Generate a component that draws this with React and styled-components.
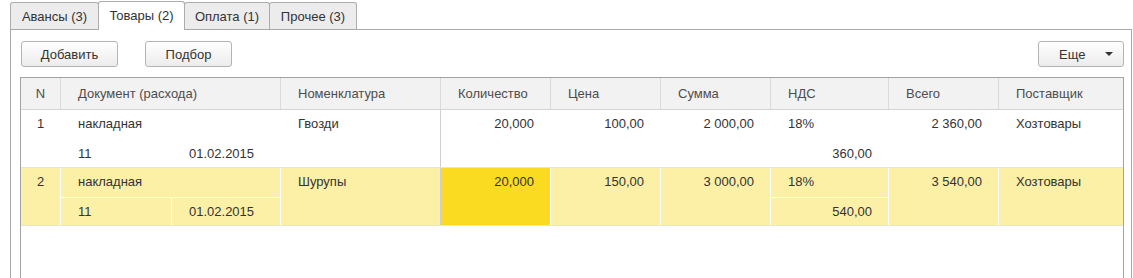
import React from "react";
import styled, { createGlobalStyle } from "styled-components";

const GlobalStyle = createGlobalStyle`
  html, body {
    margin: 0;
    padding: 0;
    background: #fff;
    overflow: hidden;
  }
  body {
    font-family: "Liberation Sans", Arial, sans-serif;
    font-size: 13px;
    color: #333;
  }
`;

const COLS = "40px 220px 160px 110px 110px 110px 118px 110px 1fr";

const Page = styled.div`
  display: flex;
  flex-direction: column;
  height: 100vh;
  box-sizing: border-box;
  padding: 1px 1px 0 10px;
`;

const TabBar = styled.div`
  display: flex;
  align-items: flex-end;
  height: 28px;
  position: relative;
  z-index: 1;
`;

const Tab = styled.div`
  box-sizing: border-box;
  width: ${(p) => p.$w}px;
  height: ${(p) => (p.$active ? "29px" : "27px")};
  margin-bottom: ${(p) => (p.$active ? "-1px" : "0")};
  margin-left: ${(p) => (p.$first ? "0" : "-1px")};
  display: flex;
  align-items: center;
  justify-content: center;
  padding-bottom: ${(p) => (p.$active ? "1px" : "0")};
  border: 1px solid #adadad;
  border-bottom: none;
  border-radius: 3px 3px 0 0;
  background: ${(p) => (p.$active ? "#fff" : "#ececec")};
  color: #333;
  white-space: nowrap;
  position: relative;
  z-index: ${(p) => (p.$active ? 2 : 1)};
`;

const Panel = styled.div`
  flex: 1;
  display: flex;
  flex-direction: column;
  border: 1px solid #a8a8a8;
  border-bottom: none;
  padding: 11px 7px 0 9px;
  min-height: 0;
`;

const Toolbar = styled.div`
  display: flex;
  align-items: center;
  height: 26px;
  padding-left: 1px;
`;

const Button = styled.button`
  box-sizing: border-box;
  width: ${(p) => p.$w}px;
  height: 26px;
  margin-right: ${(p) => p.$gap || 0}px;
  border: 1px solid #b4b4b4;
  border-radius: 3px;
  background: linear-gradient(#ffffff, #ececec);
  font-family: inherit;
  font-size: 13px;
  color: #333;
  padding: 0;
  display: flex;
  align-items: center;
  justify-content: center;
`;

const MoreButton = styled(Button)`
  margin-left: auto;
  justify-content: space-between;
  padding: 0 10px 0 20px;
`;

const Caret = styled.span`
  width: 0;
  height: 0;
  border-left: 4px solid transparent;
  border-right: 4px solid transparent;
  border-top: 4px solid #333;
`;

const Table = styled.div`
  flex: 1;
  margin-top: 10px;
  border: 1px solid #a3a3a3;
  border-bottom: none;
`;

const Row = styled.div`
  display: grid;
  grid-template-columns: ${COLS};
  border-bottom: 1px solid #e3e3e3;
  background: ${(p) => (p.$selected ? "#fbf0a6" : "#fff")};
`;

const HeadRow = styled(Row)`
  background: #f2f2f2;
  border-bottom: 1px solid #d4d4d4;
`;

const HeadCell = styled.div`
  height: 31px;
  display: flex;
  align-items: center;
  justify-content: ${(p) => (p.$center ? "center" : "flex-start")};
  padding: ${(p) => (p.$center ? "0" : "0 17px")};
  border-right: ${(p) => (p.$last ? "none" : "1px solid #dadada")};
  color: #4d4d4d;
  white-space: nowrap;
`;

const Cell = styled.div`
  display: flex;
  flex-direction: column;
  min-width: 0;
  border-right: 1px solid ${(p) => (p.$divider ? "#cfcfcf" : p.$last ? "transparent" : "#fff")};
  background: ${(p) => (p.$current ? "#fadb21" : "transparent")};
`;

const Line = styled.div`
  box-sizing: border-box;
  height: ${(p) => (p.$second ? "27px" : "30px")};
  display: flex;
  align-items: center;
  justify-content: ${(p) => (p.$right ? "flex-end" : p.$center ? "center" : "flex-start")};
  padding: ${(p) => (p.$center ? "0 0 3px" : p.$second ? "0 16px 0 17px" : "0 16px 3px 17px")};
  border-bottom: 1px solid ${(p) => (p.$split ? "#fff" : "transparent")};
  white-space: nowrap;
`;

const SubLine = styled.div`
  display: flex;
  height: 27px;
`;

const SubCell = styled.div`
  box-sizing: border-box;
  flex: ${(p) => (p.$w ? `0 0 ${p.$w}px` : 1)};
  display: flex;
  align-items: center;
  padding-left: 17px;
  border-right: 1px solid ${(p) => (p.$split ? "#fff" : "transparent")};
`;

const tabs = [
  { label: "Авансы (3)", w: 89 },
  { label: "Товары (2)", w: 87, active: true },
  { label: "Оплата (1)", w: 86 },
  { label: "Прочее (3)", w: 88 },
];

const headers = [
  "Документ (расхода)",
  "Номенклатура",
  "Количество",
  "Цена",
  "Сумма",
  "НДС",
  "Всего",
  "Поставщик",
];

const rows = [
  { n: "1", doc: "накладная", num: "11", date: "01.02.2015", item: "Гвозди", qty: "20,000", price: "100,00", sum: "2 000,00", rate: "18%", vat: "360,00", total: "2 360,00", vendor: "Хозтовары" },
  { n: "2", doc: "накладная", num: "11", date: "01.02.2015", item: "Шурупы", qty: "20,000", price: "150,00", sum: "3 000,00", rate: "18%", vat: "540,00", total: "3 540,00", vendor: "Хозтовары", selected: true },
];

const DataRow = ({ r }) => {
  const s = !!r.selected;
  return (
    <Row $selected={s}>
      <Cell>
        <Line $center>{r.n}</Line>
      </Cell>
      <Cell>
        <Line $split={s}>{r.doc}</Line>
        <SubLine>
          <SubCell $w={111} $split={s}>{r.num}</SubCell>
          <SubCell>{r.date}</SubCell>
        </SubLine>
      </Cell>
      <Cell $divider>
        <Line>{r.item}</Line>
      </Cell>
      <Cell $current={s}>
        <Line $right>{r.qty}</Line>
      </Cell>
      <Cell>
        <Line $right>{r.price}</Line>
      </Cell>
      <Cell>
        <Line $right>{r.sum}</Line>
      </Cell>
      <Cell>
        <Line $split={s}>{r.rate}</Line>
        <Line $second $right>{r.vat}</Line>
      </Cell>
      <Cell>
        <Line $right>{r.total}</Line>
      </Cell>
      <Cell $last>
        <Line>{r.vendor}</Line>
      </Cell>
    </Row>
  );
};

export default function App() {
  return (
    <>
      <GlobalStyle />
      <Page>
        <TabBar>
          {tabs.map((t, i) => (
            <Tab key={t.label} $w={t.w} $first={i === 0} $active={t.active}>
              {t.label}
            </Tab>
          ))}
        </TabBar>
        <Panel>
          <Toolbar>
            <Button $w={97} $gap={27}>Добавить</Button>
            <Button $w={87}>Подбор</Button>
            <MoreButton $w={86}>
              Еще
              <Caret />
            </MoreButton>
          </Toolbar>
          <Table>
            <HeadRow>
              <HeadCell $center>N</HeadCell>
              {headers.map((h, i) => (
                <HeadCell key={h} $last={i === headers.length - 1}>
                  {h}
                </HeadCell>
              ))}
            </HeadRow>
            {rows.map((r) => (
              <DataRow key={r.n} r={r} />
            ))}
          </Table>
        </Panel>
      </Page>
    </>
  );
}
